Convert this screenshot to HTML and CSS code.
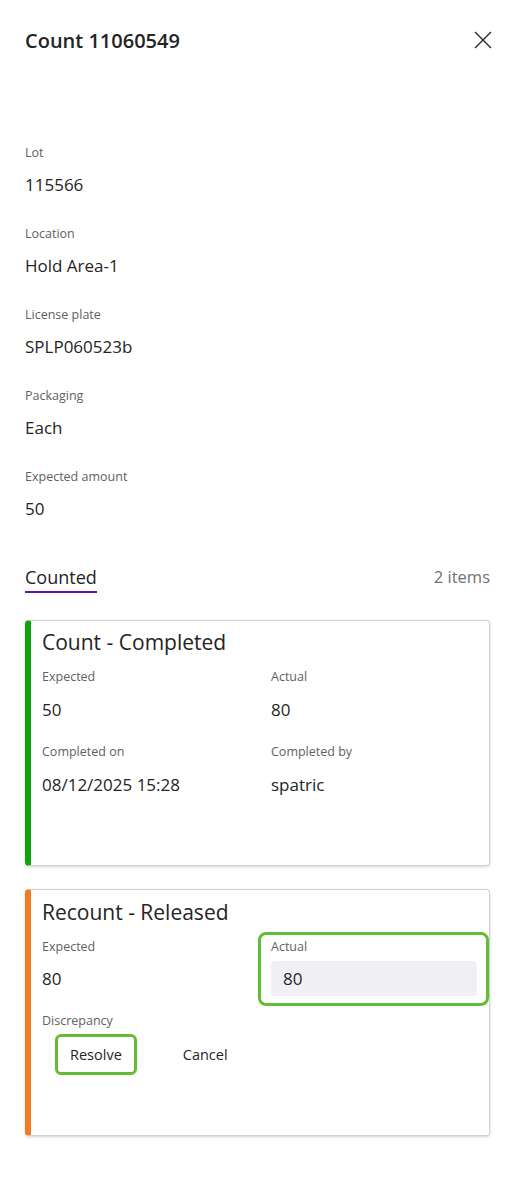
FILE: index.html
```html
<!DOCTYPE html>
<html lang="en">
<head>
    <meta charset="UTF-8">
    <meta name="viewport" content="width=device-width, initial-scale=1.0">
    <title>Count 11060549</title>
    <link rel="stylesheet" href="styles.css">
</head>
<body>
    <div class="panel">
        <div class="panel-header">
            <h1 class="panel-title">Count 11060549</h1>
            <button class="close-btn" aria-label="Close">
                <svg width="18" height="18" viewBox="0 0 18 18">
                    <path d="M1 1 L17 17 M17 1 L1 17" stroke="#242424" stroke-width="1.3" fill="none"/>
                </svg>
            </button>
        </div>

        <div class="fields">
            <div class="field">
                <div class="label">Lot</div>
                <div class="value">115566</div>
            </div>
            <div class="field">
                <div class="label">Location</div>
                <div class="value">Hold Area-1</div>
            </div>
            <div class="field">
                <div class="label">License plate</div>
                <div class="value">SPLP060523b</div>
            </div>
            <div class="field">
                <div class="label">Packaging</div>
                <div class="value">Each</div>
            </div>
            <div class="field">
                <div class="label">Expected amount</div>
                <div class="value">50</div>
            </div>
        </div>

        <div class="tabs">
            <div class="tab active">Counted</div>
            <div class="item-count">2 items</div>
        </div>

        <div class="card card-completed">
            <div class="card-title">Count - Completed</div>
            <div class="card-grid">
                <div class="cell">
                    <div class="label">Expected</div>
                    <div class="value">50</div>
                </div>
                <div class="cell">
                    <div class="label">Actual</div>
                    <div class="value">80</div>
                </div>
                <div class="cell">
                    <div class="label">Completed on</div>
                    <div class="value">08/12/2025 15:28</div>
                </div>
                <div class="cell">
                    <div class="label">Completed by</div>
                    <div class="value">spatric</div>
                </div>
            </div>
        </div>

        <div class="card card-released">
            <div class="card-title">Recount - Released</div>
            <div class="card-grid">
                <div class="cell">
                    <div class="label">Expected</div>
                    <div class="value">80</div>
                </div>
                <div class="cell highlight highlight-field">
                    <div class="label">Actual</div>
                    <input class="input" type="text" value="80">
                </div>
            </div>
            <div class="label discrepancy">Discrepancy</div>
            <div class="actions">
                <button class="btn highlight highlight-btn">Resolve</button>
                <button class="btn">Cancel</button>
            </div>
        </div>
    </div>
</body>
</html>
```

FILE: styles.css
```css
:root {
    --text: #242424;
    --label: #616161;
    --muted: #707070;
    --accent: #5c12bd;
    --green: #13a10e;
    --orange: #f07b24;
    --mark: #62bd34;
}

body {
    margin: 0;
    font-family: 'Open Sans', 'Noto Sans', sans-serif;
    color: var(--text);
    background: #ffffff;
}

.panel {
    padding: 0 25px 40px;
}

.panel-header {
    display: flex;
    justify-content: space-between;
    align-items: flex-start;
    padding-top: 27px;
}

.panel-title {
    margin: 0;
    font-size: 20px;
    line-height: 28px;
    font-weight: 600;
}

.close-btn {
    border: none;
    background: none;
    padding: 0;
    margin: 1px -5px 0 0;
    width: 24px;
    height: 24px;
    display: flex;
    align-items: center;
    justify-content: center;
    cursor: pointer;
}

.fields {
    margin-top: 89px;
}

.field {
    margin-bottom: 28px;
}

.field:last-child {
    margin-bottom: 0;
}

.label {
    font-size: 12.5px;
    line-height: 18px;
    color: var(--label);
}

.value {
    margin-top: 11px;
    font-size: 17px;
    line-height: 24px;
}

.tabs {
    margin-top: 44px;
    display: flex;
    justify-content: space-between;
    align-items: flex-start;
}

.tab {
    font-size: 18px;
    line-height: 24px;
    padding-bottom: 2px;
    border-bottom: 2px solid var(--accent);
}

.item-count {
    font-size: 16.5px;
    line-height: 24px;
    color: var(--muted);
}

.card {
    margin-top: 27px;
    height: 246px;
    box-sizing: border-box;
    border: 1px solid #d1d1d1;
    border-left: 6px solid var(--green);
    border-radius: 4px;
    box-shadow: 0 1px 3px rgba(0, 0, 0, 0.18);
    padding: 7px 12px 0 11px;
}

.card-released {
    margin-top: 23px;
    height: 247px;
    border-left-color: var(--orange);
    padding-top: 8px;
}

.card-title {
    font-size: 21px;
    line-height: 28px;
}

.card-grid {
    display: grid;
    grid-template-columns: 229px 1fr;
    row-gap: 21px;
    margin-top: 12px;
    align-items: start;
}

.cell .value {
    margin-top: 12px;
}

.card-released .cell .value {
    margin-top: 11px;
}

.input {
    display: block;
    box-sizing: border-box;
    width: 206px;
    height: 35px;
    margin-top: 5px;
    padding: 0 12px;
    border: none;
    border-radius: 4px;
    background: #f0f0f4;
    font-family: inherit;
    font-size: 17px;
    color: var(--text);
}

.discrepancy {
    margin-top: 16px;
}

.actions {
    display: flex;
    align-items: center;
    gap: 37px;
    margin-top: 7px;
    padding-left: 16px;
}

.btn {
    border: none;
    background: #ffffff;
    font-family: inherit;
    font-size: 14.5px;
    color: var(--text);
    height: 35px;
    padding: 0 12px;
    cursor: pointer;
}

.highlight {
    position: relative;
}

.highlight::after {
    content: "";
    position: absolute;
    border: 3px solid var(--mark);
    border-radius: 8px;
    pointer-events: none;
}

.highlight-field::after {
    top: -6px;
    left: -13px;
    right: -12px;
    bottom: -10px;
}

.highlight-btn {
    box-shadow: 0 1px 3px rgba(0, 0, 0, 0.15);
}

.highlight-btn::after {
    top: -3px;
    left: -3px;
    right: -3px;
    bottom: -3px;
    border-radius: 6px;
}
```
